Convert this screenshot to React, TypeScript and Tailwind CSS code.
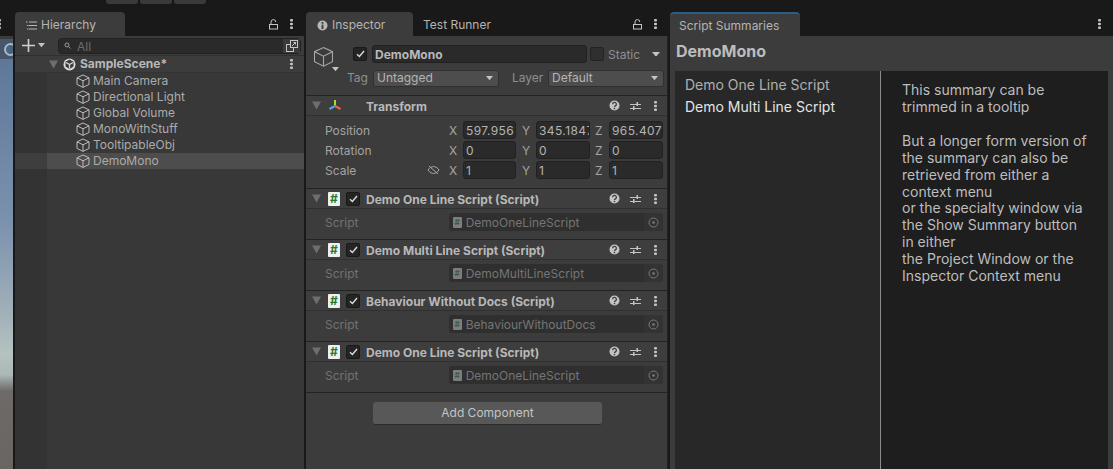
const font = { fontFamily: 'Inter, "Noto Sans", sans-serif' };

function Dots({ className = '' }: { className?: string }) {
  return (
    <svg width="3" height="10" viewBox="0 0 3 10" className={`shrink-0 ${className}`} fill="currentColor">
      <rect x="0" y="0" width="3" height="2.6" rx="1" />
      <rect x="0" y="3.7" width="3" height="2.6" rx="1" />
      <rect x="0" y="7.4" width="3" height="2.6" rx="1" />
    </svg>
  );
}

function Lock() {
  return (
    <svg width="9" height="11" viewBox="0 0 9 11" fill="none" stroke="#c4c4c4" strokeWidth="1">
      <rect x="0.5" y="5.5" width="8" height="4.5" />
      <path d="M2 5V3a2.4 2.4 0 0 1 4.8 0" />
    </svg>
  );
}

function Cube({ size = 14, color = '#bdbdbd' }: { size?: number; color?: string }) {
  return (
    <svg width={size} height={size} viewBox="0 0 14 14" fill="none" stroke={color} strokeWidth={size > 14 ? 0.7 : 1} className="shrink-0">
      <path d="M7 1 L13 3.8 V10.4 L7 13.4 L1 10.4 V3.8 Z" />
      <path d="M1 3.8 L7 6.8 L13 3.8 M7 6.8 V13.4" />
    </svg>
  );
}

function Caret({ color = '#c4c4c4', w = 8 }: { color?: string; w?: number }) {
  return (
    <svg width={w} height={w * 0.6} viewBox="0 0 10 6" fill={color} className="shrink-0">
      <path d="M0 0H10L5 6Z" />
    </svg>
  );
}

function Fold() {
  return (
    <svg width="9" height="9" viewBox="0 0 9 9" fill="#6e6e6e" className="shrink-0">
      <path d="M0 0.5H9L4.5 8.5Z" />
    </svg>
  );
}

function Check() {
  return (
    <div className="w-[14px] h-[14px] rounded-[2px] bg-[#242424] border border-[#191919] flex items-center justify-center shrink-0">
      <svg width="9" height="8" viewBox="0 0 9 8" fill="none" stroke="#dcdcdc" strokeWidth="1.4">
        <path d="M1 4.2 L3.4 6.5 L8 1" />
      </svg>
    </div>
  );
}

function HeaderTools() {
  return (
    <div className="ml-auto flex items-center text-[#c4c4c4]">
      <svg width="11" height="11" viewBox="0 0 11 11">
        <circle cx="5.5" cy="5.5" r="5" fill="#c4c4c4" />
        <path d="M3.6 4.2a1.9 1.9 0 1 1 2.8 1.7c-.6.3-.9.6-.9 1.1" fill="none" stroke="#3e3e3e" strokeWidth="1.3" />
        <rect x="4.8" y="7.8" width="1.4" height="1.4" fill="#3e3e3e" />
      </svg>
      <svg width="11" height="10" viewBox="0 0 11 10" fill="none" stroke="#c4c4c4" strokeWidth="1" className="ml-[10px]">
        <path d="M0 3.5H11M0 7.5H11" />
        <rect x="6.5" y="1" width="1.5" height="4" fill="#c4c4c4" stroke="none" />
        <rect x="3" y="5" width="1.5" height="4" fill="#c4c4c4" stroke="none" />
      </svg>
      <Dots className="ml-[13px] mr-[10px]" />
    </div>
  );
}

function CsIcon({ small = false }: { small?: boolean }) {
  if (small) {
    return (
      <div className="w-[9px] h-[11px] bg-[#7d7d7d] rounded-[1px] flex items-center justify-center text-[8px] leading-none font-bold text-[#3c5c40] shrink-0">
        #
      </div>
    );
  }
  return (
    <div className="w-[12px] h-[14px] bg-[#f0f0f0] rounded-[1px] flex items-center justify-center text-[12px] leading-none font-bold text-[#1f7a32] shrink-0">
      #
    </div>
  );
}

function ScriptComponent({ title, script }: { title: string; script: string }) {
  return (
    <div className="border-b border-[#232323]">
      <div className="h-[20px] bg-[#3e3e3e] border-b border-[#303030] flex items-center pl-[6px]">
        <Fold />
        <div className="ml-[7px]">
          <CsIcon />
        </div>
        <div className="ml-[6px]">
          <Check />
        </div>
        <span className="ml-[6px] pt-[2px] text-[12px] font-bold text-[#b8b8b8] whitespace-nowrap">{title}</span>
        <HeaderTools />
      </div>
      <div className="h-[30px] flex items-start pt-[4px] pl-[19px] pr-[4px]">
        <span className="w-[124px] h-[18px] flex items-center pt-[2px] text-[12px] text-[#737373]">Script</span>
        <div className="w-[215px] h-[18px] bg-[#2f2f2f] rounded-[3px] flex items-center pl-[4px] overflow-hidden">
          <CsIcon small />
          <span className="ml-[4px] pt-[2px] text-[12px] text-[#757575] whitespace-nowrap">{script}</span>
          <div className="ml-auto w-[19px] h-full bg-[#333333] flex items-center justify-center">
            <svg width="11" height="11" viewBox="0 0 11 11" fill="none" stroke="#7a7a7a">
              <circle cx="5.5" cy="5.5" r="4.5" />
              <circle cx="5.5" cy="5.5" r="1.3" fill="#7a7a7a" stroke="none" />
            </svg>
          </div>
        </div>
      </div>
    </div>
  );
}

function Vec({ axis, value, width }: { axis: string; value: string; width: string }) {
  return (
    <div className="w-[73px] flex items-center shrink-0">
      <span className="w-[15px] pl-[1px] pt-[2px] text-[12px] text-[#a3a3a3]">{axis}</span>
      <div className={`${width} h-[18px] bg-[#2a2a2a] border border-[#212121] rounded-[3px] pl-[2px] pt-[1px] text-[12px] leading-[16px] text-[#b4b4b4] overflow-hidden whitespace-nowrap tracking-[0.4px]`}>
        {value}
      </div>
    </div>
  );
}

function TransformRow({ label, values, link }: { label: string; values: string[]; link?: boolean }) {
  return (
    <div className="h-[20px] flex items-center pl-[19px]">
      <span className="w-[103px] pt-[2px] text-[12px] text-[#a3a3a3]">{label}</span>
      <div className="w-[21px] flex">
        {link && (
          <svg width="13" height="10" viewBox="0 0 13 10" fill="none" stroke="#a8a8a8" strokeWidth="1">
            <path d="M1 5C3 2 5 1.6 6.5 1.6S10 2 12 5C10 8 8 8.4 6.5 8.4S3 8 1 5Z" />
            <path d="M2 1L11 9" />
          </svg>
        )}
      </div>
      <Vec axis="X" value={values[0]} width="w-[53px]" />
      <Vec axis="Y" value={values[1]} width="w-[54px]" />
      <Vec axis="Z" value={values[2]} width="w-[54px]" />
    </div>
  );
}

const objects = ['Main Camera', 'Directional Light', 'Global Volume', 'MonoWithStuff', 'TooltipableObj', 'DemoMono'];

export default function App() {
  return (
    <div className="w-[1113px] h-[469px] bg-[#191919] overflow-hidden flex flex-col" style={font}>
      {/* top toolbar leftovers */}
      <div className="h-[12px] shrink-0 flex items-start pl-[106px] gap-[2px]">
        <div className="w-[32px] h-[4px] bg-[#3a3a3a] rounded-b-[3px]" />
        <div className="w-[32px] h-[4px] bg-[#3a3a3a] rounded-b-[3px]" />
        <div className="w-[32px] h-[4px] bg-[#3a3a3a] rounded-b-[3px]" />
      </div>

      <div className="flex-1 flex min-h-0">
        {/* scene view sliver */}
        <div className="w-[13px] shrink-0 flex flex-col overflow-hidden">
          <div className="h-[24px] flex items-center text-[#c4c4c4]">
            <Dots className="-ml-[2px]" />
          </div>
          <div className="h-[23px] bg-[#46566b] border-t-[3px] border-[#3c3c3c] flex items-center pl-[4px]">
            <div className="w-[13px] h-[13px] rounded-full border-2 border-[#a9b9c9] bg-[#49627f] shrink-0" />
          </div>
          <div className="flex-1 bg-[linear-gradient(#5f7799_0%,#7b92ae_40%,#a1b1b9_62%,#b4c2c0_72%,#aab8b6_77%,#6d6a67_81%,#6a6561_100%)]" />
        </div>
        <div className="w-[2px] shrink-0" />

        {/* hierarchy */}
        <div className="w-[289px] shrink-0 flex flex-col">
          <div className="h-[24px] flex items-center">
            <div className="w-[110px] h-full bg-[#3c3c3c] rounded-t-[4px] flex items-center pl-[11px] pt-[2px]">
              <svg width="11" height="9" viewBox="0 0 11 9" stroke="#b8b8b8" strokeWidth="1">
                <path d="M3 1H11M3 4.5H11M3 8H11M0 1H1.5M1 4.5H2.5M1 8H2.5" />
              </svg>
              <span className="ml-[4px] text-[12px] text-[#b4b4b4]">Hierarchy</span>
            </div>
            <div className="ml-auto flex items-center text-[#c4c4c4]">
              <Lock />
              <Dots className="ml-[12px] mr-[11px]" />
            </div>
          </div>
          <div className="h-[20px] bg-[#3c3c3c] flex items-center pl-[7px] pr-[3px] border-b border-[#2f2f2f]">
            <svg width="13" height="13" viewBox="0 0 13 13" fill="#d0d0d0">
              <path d="M5.7 0h1.6v5.7H13v1.6H7.3V13H5.7V7.3H0V5.7h5.7z" />
            </svg>
            <div className="ml-[3px]">
              <Caret w={7} />
            </div>
            <div className="ml-[13px] flex-1 h-[16px] bg-[#2a2a2a] border border-[#212121] rounded-[4px] flex items-center pl-[5px]">
              <svg width="9" height="8" viewBox="0 0 9 8" fill="none" stroke="#9a9a9a">
                <circle cx="3" cy="3" r="2" />
                <path d="M4.5 4.5L6.5 6.5" />
              </svg>
              <span className="ml-[4px] pt-[2px] text-[12px] text-[#6c6c6c]">All</span>
              <div className="ml-auto w-[17px] h-[14px] bg-[#3a3a3a] flex items-center justify-center">
                <svg width="12" height="12" viewBox="0 0 12 12" fill="none" stroke="#c4c4c4">
                  <rect x="0.5" y="4.5" width="7" height="7" />
                  <rect x="4.5" y="0.5" width="7" height="7" fill="#3a3a3a" />
                  <path d="M6 6L9.5 2.5M7.5 2.5H9.5V4.5" />
                </svg>
              </div>
            </div>
          </div>
          <div className="h-[17px] bg-[#3c3c3c] border-b border-[#333333] flex items-center pl-[34px] pr-[11px]">
            <Fold />
            <svg width="13" height="13" viewBox="0 0 13 13" className="ml-[5px] shrink-0">
              <circle cx="6.5" cy="6.5" r="6" fill="#dcdcdc" />
              <path d="M6.5 1.5L10.5 3.8V8.6L6.5 11L2.5 8.6V3.8Z" fill="#3c3c3c" />
              <path d="M6.5 6.5L3 4.4M6.5 6.5L10 4.4M6.5 6.5V10.5" stroke="#dcdcdc" strokeWidth="1.2" />
            </svg>
            <span className="ml-[4px] text-[12px] font-bold text-[#b8b8b8]">SampleScene*</span>
            <Dots className="ml-auto text-[#c4c4c4]" />
          </div>
          <div className="flex-1 flex flex-col bg-[#383838]">
            {objects.map((name) => (
              <div key={name} className={`h-[16px] flex ${name === 'DemoMono' ? 'bg-[#4d4d4d]' : ''}`}>
                <div className={`w-[32px] shrink-0 ${name === 'DemoMono' ? 'bg-[#3e3e3e]' : 'bg-[#333333]'}`} />
                <div className="flex items-center pl-[29px]">
                  <Cube />
                  <span className="ml-[3px] text-[12px] text-[#ababab]">{name}</span>
                </div>
              </div>
            ))}
            <div className="flex-1 flex">
              <div className="w-[32px] bg-[#333333]" />
            </div>
          </div>
        </div>
        <div className="w-[2px] shrink-0" />

        {/* inspector */}
        <div className="w-[362px] shrink-0 flex flex-col">
          <div className="h-[24px] flex items-center">
            <div className="w-[107px] h-full bg-[#3c3c3c] rounded-t-[4px] flex items-center pl-[11px] pt-[2px]">
              <svg width="11" height="11" viewBox="0 0 11 11">
                <circle cx="5.5" cy="5.5" r="5" fill="#b8b8b8" />
                <rect x="4.6" y="2" width="1.8" height="1.8" fill="#3c3c3c" />
                <rect x="4.6" y="4.6" width="1.8" height="4.4" fill="#3c3c3c" />
              </svg>
              <span className="ml-[4px] text-[12px] text-[#b4b4b4]">Inspector</span>
            </div>
            <span className="ml-[10px] pt-[2px] text-[12px] text-[#b4b4b4]">Test Runner</span>
            <div className="ml-auto flex items-center text-[#c4c4c4]">
              <Lock />
              <Dots className="ml-[12px] mr-[11px]" />
            </div>
          </div>
          <div className="flex-1 bg-[#3c3c3c] flex flex-col border-r border-[#232323]">
            <div className="h-[60px] shrink-0 border-b border-[#232323] flex">
              <div className="w-[32px] pl-[7px] pt-[10px] flex flex-col shrink-0">
                <Cube size={21} color="#a8a8a8" />
                <div className="pl-[19px] flex">
                  <Caret w={7} />
                </div>
              </div>
              <div className="flex-1 flex flex-col pt-[9px]">
                <div className="flex items-center h-[18px] pl-[15px]">
                  <Check />
                  <div className="ml-[5px] w-[215px] h-[18px] bg-[#2a2a2a] border border-[#212121] rounded-[3px] pl-[2px] pt-[1px] text-[12px] leading-[16px] font-bold text-[#b8b8b8] shrink-0">
                    DemoMono
                  </div>
                  <div className="ml-[3px] w-[14px] h-[14px] rounded-[2px] bg-[#2f2f2f] border border-[#232323] shrink-0" />
                  <span className="ml-[4px] pt-[2px] text-[12px] text-[#8f8f8f]">Static</span>
                  <div className="ml-[12px] flex">
                    <Caret w={8} />
                  </div>
                </div>
                <div className="flex items-center h-[18px] mt-[6px] pl-[9px]">
                  <span className="text-[12px] text-[#8f8f8f] w-[26px]">Tag</span>
                  <div className="w-[126px] h-[17px] bg-[#4d4d4d] border border-[#303030] rounded-[3px] pl-[3px] pr-[5px] flex items-center justify-between text-[12px] text-[#b4b4b4]">
                    Untagged
                    <Caret w={7} />
                  </div>
                  <span className="ml-[13px] text-[12px] text-[#8f8f8f] w-[36px]">Layer</span>
                  <div className="w-[116px] h-[17px] bg-[#4d4d4d] border border-[#303030] rounded-[3px] pl-[3px] pr-[5px] flex items-center justify-between text-[12px] text-[#b4b4b4]">
                    Default
                    <Caret w={7} />
                  </div>
                </div>
              </div>
            </div>

            <div className="border-b border-[#232323]">
              <div className="h-[20px] bg-[#3e3e3e] border-b border-[#303030] flex items-center pl-[6px]">
                <Fold />
                <svg width="14" height="13" viewBox="0 0 14 13" fill="none" strokeWidth="2" className="ml-[7px] shrink-0">
                  <path d="M7 6.5V1" stroke="#9fdc3c" />
                  <path d="M7 7L1.5 10" stroke="#4aa8e8" />
                  <path d="M7 7L12.5 10" stroke="#e8663c" />
                </svg>
                <span className="ml-[24px] pt-[2px] text-[12px] font-bold text-[#b8b8b8]">Transform</span>
                <HeaderTools />
              </div>
              <div className="pt-[4px] pb-[8px]">
                <TransformRow label="Position" values={['597.956', '345.1847', '965.407']} />
                <TransformRow label="Rotation" values={['0', '0', '0']} />
                <TransformRow label="Scale" values={['1', '1', '1']} link />
              </div>
            </div>

            <ScriptComponent title="Demo One Line Script (Script)" script="DemoOneLineScript" />
            <ScriptComponent title="Demo Multi Line Script (Script)" script="DemoMultiLineScript" />
            <ScriptComponent title="Behaviour Without Docs (Script)" script="BehaviourWithoutDocs" />
            <ScriptComponent title="Demo One Line Script (Script)" script="DemoOneLineScript" />

            <div className="pt-[9px] pl-[67px] flex">
              <button className="w-[229px] h-[23px] bg-[#585858] border-b border-[#2a2a2a] rounded-[3px] text-[12px] text-[#c4c4c4]">
                Add Component
              </button>
            </div>
          </div>
        </div>
        <div className="w-[2px] shrink-0" />

        {/* script summaries */}
        <div className="flex-1 flex flex-col min-w-0">
          <div className="h-[24px] flex items-center">
            <div className="w-[130px] h-full bg-[#3c3c3c] rounded-t-[4px] border-t-2 border-[#2c5d87] flex items-center pl-[9px] pt-[1px] text-[12px] text-[#b4b4b4]">
              Script Summaries
            </div>
            <Dots className="ml-auto mr-[12px] text-[#c4c4c4]" />
          </div>
          <div className="flex-1 bg-[#3c3c3c] flex flex-col min-h-0">
            <div className="h-[35px] shrink-0 pl-[6px] pt-[5px] text-[16px] leading-[20px] font-bold text-[#bdbdbd]">DemoMono</div>
            <div className="flex-1 flex mx-[5px] min-h-0">
              <div className="w-[205px] bg-[#282828] pl-[10px] pt-[3px] text-[14px] leading-[22px]">
                <div className="text-[#b0b0b0]">Demo One Line Script</div>
                <div className="text-[#e4e4e4]">Demo Multi Line Script</div>
              </div>
              <div className="w-[1px] bg-[#8c8c8c]" />
              <div className="flex-1 bg-[#1e1e1e] pl-[21px] pr-[10px] pt-[11px] text-[14px] leading-[16.9px] text-[#bdbdbd]">
                <div>This summary can be</div>
                <div>trimmed in a tooltip</div>
                <div className="h-[17px]" />
                <div>But a longer form version of</div>
                <div>the summary can also be</div>
                <div>retrieved from either a</div>
                <div>context menu</div>
                <div>or the specialty window via</div>
                <div>the Show Summary button</div>
                <div>in either</div>
                <div>the Project Window or the</div>
                <div>Inspector Context menu</div>
              </div>
            </div>
          </div>
        </div>
      </div>
    </div>
  );
}
